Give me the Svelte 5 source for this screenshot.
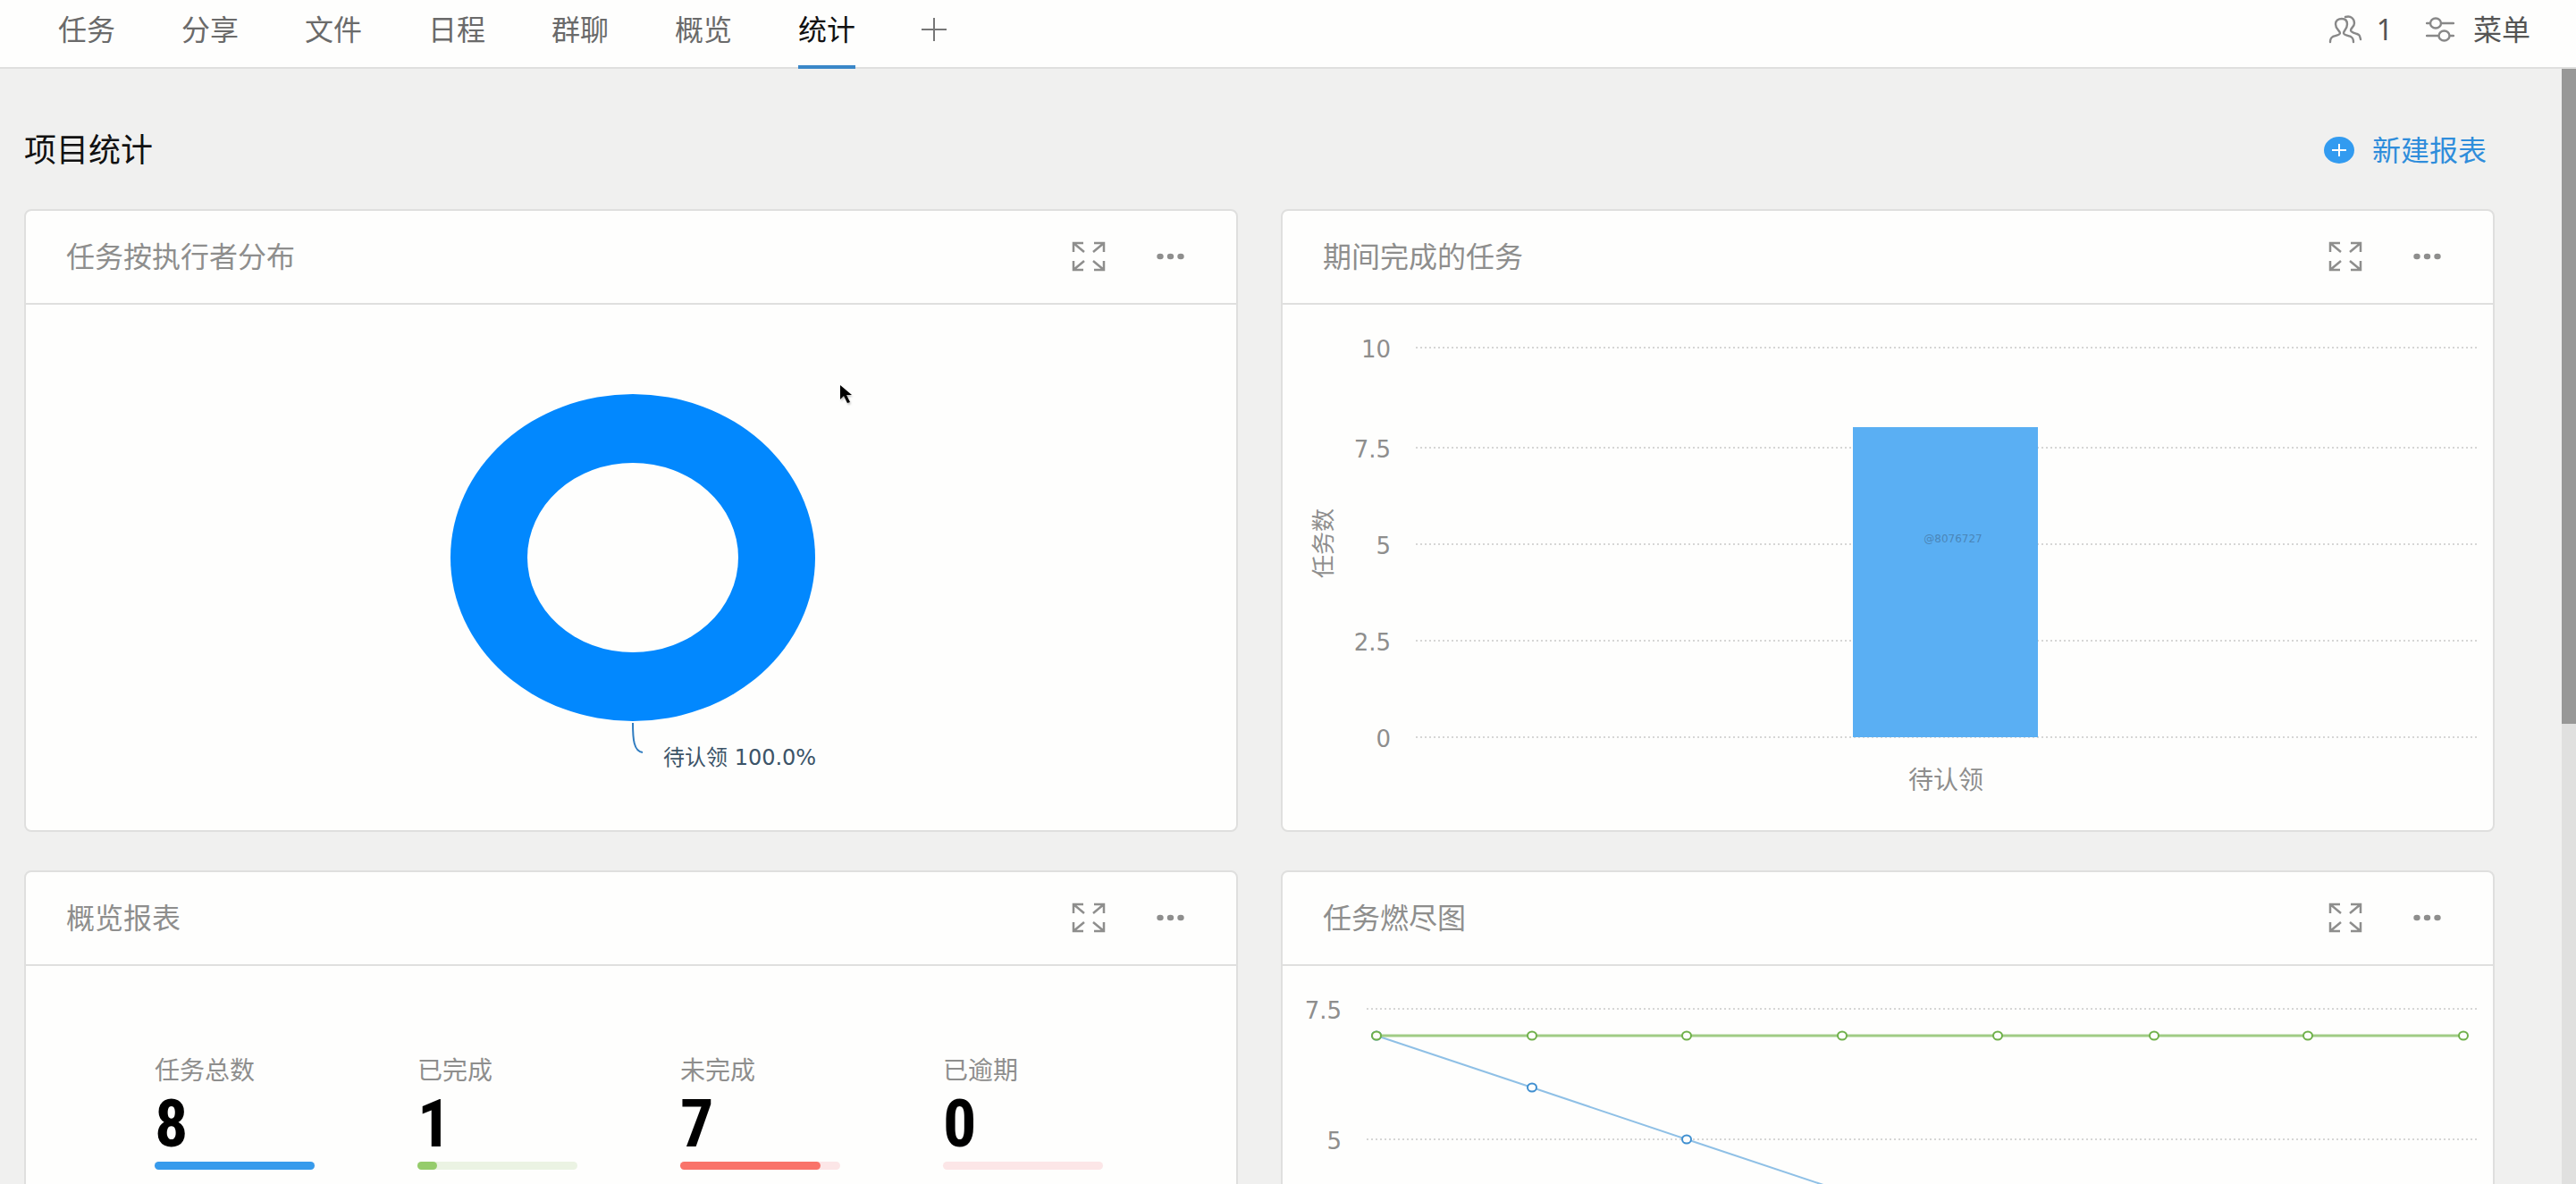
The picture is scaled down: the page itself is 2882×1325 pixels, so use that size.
<script>
  const tabs = ['任务', '分享', '文件', '日程', '群聊', '概览', '统计'];
  const active = '统计';

  const barTicks = [
    { label: '10', y: 48 },
    { label: '7.5', y: 160 },
    { label: '5', y: 268 },
    { label: '2.5', y: 376 },
    { label: '0', y: 484 }
  ];

  const stats = [
    { label: '任务总数', value: 8, share: 100, tone: 'blue' },
    { label: '已完成', value: 1, share: 12.5, tone: 'green' },
    { label: '未完成', value: 7, share: 87.5, tone: 'red' },
    { label: '已逾期', value: 0, share: 0, tone: 'red' }
  ];

  const burnTicks = [
    { label: '7.5', y: 48 },
    { label: '5', y: 194 }
  ];
  const days = [105, 279, 452, 626, 800, 975, 1147, 1321];
  const actual = days.map((x) => ({ x, y: 78 }));
  const ideal = days.map((x, i) => ({ x, y: 78 + 58 * i }));
  const toPoints = (list) => list.map((p) => `${p.x},${p.y}`).join(' ');
</script>

{#snippet cardHeader(title)}
  <header class="card-head">
    <h2>{title}</h2>
    <button class="icon-btn" aria-label="全屏">
      <svg class="expand" viewBox="0 0 38 34" aria-hidden="true">
        <path d="M13 2H2v10M2 2l12 10M25 2h11v10M36 2L24 12M13 32H2V22M2 32l12-10M25 32h11V22M36 32L24 22" />
      </svg>
    </button>
    <button class="icon-btn" aria-label="更多">
      <svg class="dots" viewBox="0 0 31 8" aria-hidden="true">
        <ellipse cx="4" cy="4" rx="3.7" ry="3.3" />
        <ellipse cx="15.5" cy="4" rx="3.7" ry="3.3" />
        <ellipse cx="27" cy="4" rx="3.7" ry="3.3" />
      </svg>
    </button>
  </header>
{/snippet}

<div class="app">
  <header class="topbar">
    <nav class="tabs">
      {#each tabs as tab}
        <a href="#{tab}" class:active={tab === active}>{tab}</a>
      {/each}
      <button class="icon-btn add" aria-label="添加">
        <svg class="plus" viewBox="0 0 28 28" aria-hidden="true"><path d="M14 1v26M0 14h28" /></svg>
      </button>
    </nav>
    <div class="tools">
      <button class="tool members">
        <svg class="people" viewBox="0 0 38 32" aria-hidden="true">
          <path d="M2 30C2 26 3 25 5 24C8 23 13 22 13 20C13 17 8 16 8 10C8 6 11 4 15 4C19 4 21 6 21 10C21 16 17 17 17 20C17 22 22 23 25 24C27 25 28 26 28 30" />
          <path d="M19 2C25 0 29 4 29 9C29 13 25 14 25 17C25 19 29 20 32 21C35 22 35 23 36 27" />
        </svg>
        <span>1</span>
      </button>
      <button class="tool menu">
        <svg class="sliders" viewBox="0 0 32 28" aria-hidden="true">
          <path d="M1 7h4M17 7h14M1 21h13M27 21h4" />
          <ellipse cx="11" cy="7" rx="6" ry="5.5" />
          <ellipse cx="20.5" cy="21" rx="6" ry="5.5" />
        </svg>
        <span>菜单</span>
      </button>
    </div>
  </header>

  <div class="viewport">
    <main>
      <div class="page-head">
        <h1>项目统计</h1>
        <button class="create">
          <svg class="create-icon" viewBox="0 0 34 32" aria-hidden="true">
            <ellipse cx="17" cy="16" rx="17" ry="15" />
            <path d="M17 9v14M9 16h16" />
          </svg>
          <span>新建报表</span>
        </button>
      </div>

      <div class="grid">
        <section class="card">
          {@render cardHeader('任务按执行者分布')}
          <svg class="chart" viewBox="0 0 1354 588" role="img" aria-label="待认领 100.0%">
            <ellipse class="ring" cx="679" cy="283" rx="204" ry="183" />
            <ellipse class="hole" cx="679" cy="283" rx="118" ry="106" />
            <path class="leader" d="M679 468C679 486 680 500 690 501" />
            <text class="pie-label" x="713" y="515">待认领 100.0%</text>
          </svg>
        </section>

        <section class="card">
          {@render cardHeader('期间完成的任务')}
          <svg class="chart" viewBox="0 0 1354 588" role="img" aria-label="任务数">
            {#each barTicks as tick}
              <line class="rule" x1="149" x2="1336" y1={tick.y} y2={tick.y} />
              <text class="tick" x="121" y={tick.y + 11}>{tick.label}</text>
            {/each}
            <rect class="bar" x="638" y="137" width="207" height="347" />
            <text class="bar-label" x="750" y="266">@8076727</text>
            <text class="axis" x="742" y="542">待认领</text>
            <text class="axis side" transform="translate(55 267) rotate(-90)">任务数</text>
          </svg>
        </section>

        <section class="card">
          {@render cardHeader('概览报表')}
          <dl class="stats">
            {#each stats as stat}
              <div class="stat {stat.tone}">
                <dt>{stat.label}</dt>
                <dd>{stat.value}</dd>
                <dd class="track"><div class="fill" style:width="{stat.share}%"></div></dd>
              </div>
            {/each}
          </dl>
        </section>

        <section class="card">
          {@render cardHeader('任务燃尽图')}
          <svg class="chart" viewBox="0 0 1354 588" role="img" aria-label="任务燃尽图">
            {#each burnTicks as tick}
              <line class="rule" x1="94" x2="1336" y1={tick.y} y2={tick.y} />
              <text class="tick" x="66" y={tick.y + 11}>{tick.label}</text>
            {/each}
            <g class="series ideal">
              <polyline points={toPoints(ideal)} />
              {#each ideal as p}<ellipse cx={p.x} cy={p.y} rx="5" ry="4.5" />{/each}
            </g>
            <g class="series actual">
              <polyline points={toPoints(actual)} />
              {#each actual as p}<ellipse cx={p.x} cy={p.y} rx="5" ry="4.5" />{/each}
            </g>
          </svg>
        </section>
      </div>
    </main>
    <div class="scrollbar" aria-hidden="true"><div class="thumb"></div><div class="rest"></div></div>
  </div>

  <svg class="pointer" viewBox="0 0 14 22" aria-hidden="true">
    <path d="M1 1v16l4-4 4 8 3-1-4-8h6z" />
  </svg>
</div>

<style>
  :global(body) {
    margin: 0;
    background: #f0f0ef;
  }

  .app {
    position: relative;
    display: flex;
    flex-direction: column;
    height: 100vh;
    overflow: hidden;
    color: #666;
    font-family: 'Noto Sans', 'Noto Sans CJK SC', sans-serif;
    font-size: 32px;
    line-height: 40px;
  }

  button {
    padding: 0;
    border: 0;
    background: none;
    color: inherit;
    font: inherit;
    cursor: pointer;
  }

  svg {
    display: block;
    flex: none;
  }

  h1,
  h2,
  dl,
  dd {
    margin: 0;
    font-weight: 400;
  }

  .topbar {
    display: flex;
    justify-content: space-between;
    flex: none;
    height: 75px;
    padding: 0 51px 0 65px;
    border-bottom: 2px solid #dfdfde;
    background: #fefefd;
  }

  .tabs {
    display: flex;
    gap: 74px;
  }

  .tabs a {
    box-sizing: border-box;
    height: 77px;
    padding-top: 13px;
    color: #6a6a6a;
    text-decoration: none;
  }

  .tabs a.active {
    border-bottom: 4px solid #3a87c8;
    color: #111;
  }

  .add {
    height: 66px;
  }

  .plus {
    width: 28px;
    height: 28px;
    fill: none;
    stroke: #777;
    stroke-width: 2;
  }

  .tools,
  .tool {
    display: flex;
    align-items: center;
  }

  .tools {
    gap: 37px;
    height: 66px;
  }

  .tool {
    color: #555;
  }

  .members {
    gap: 16px;
  }

  .menu {
    gap: 21px;
  }

  .people,
  .sliders {
    fill: none;
    stroke: #888;
    stroke-width: 2.4;
    stroke-linecap: round;
    stroke-linejoin: round;
  }

  .people {
    width: 38px;
    height: 32px;
  }

  .sliders {
    width: 32px;
    height: 28px;
  }

  .viewport {
    display: flex;
    flex: 1;
    min-height: 0;
  }

  main {
    flex: 1;
    min-width: 0;
    padding: 0 75px 0 27px;
    overflow: hidden;
  }

  .page-head {
    display: flex;
    align-items: center;
    justify-content: space-between;
    height: 82px;
    padding: 50px 9px 25px 0;
  }

  h1 {
    color: #111;
    font-size: 36px;
  }

  .create {
    display: flex;
    align-items: center;
    gap: 20px;
    color: #2f8ddb;
  }

  .create-icon {
    width: 34px;
    height: 32px;
    fill: #329bf0;
    stroke: #fff;
    stroke-width: 2;
  }

  .create-icon ellipse {
    stroke: none;
  }

  .grid {
    display: grid;
    grid-template-columns: 1fr 1fr;
    gap: 43px 48px;
  }

  .card {
    border: 2px solid #dfdfde;
    border-radius: 8px;
    background: #fefefd;
  }

  .card-head {
    display: flex;
    box-sizing: border-box;
    align-items: center;
    height: 105px;
    padding: 0 58px 2px 45px;
    border-bottom: 2px solid #dfdfde;
    color: #8e8e8d;
  }

  h2 {
    flex: 1;
    font-size: 32px;
  }

  .icon-btn {
    display: flex;
    align-items: center;
  }

  .card-head .icon-btn + .icon-btn {
    margin-left: 57px;
  }

  .expand {
    width: 38px;
    height: 34px;
    fill: none;
    stroke: #8e8e8d;
    stroke-width: 2.5;
  }

  .dots {
    width: 31px;
    height: 8px;
    fill: #8e8e8d;
  }

  .chart {
    width: 100%;
    height: auto;
    font-family: 'DejaVu Sans', 'Noto Sans CJK SC', sans-serif;
  }

  .ring {
    fill: #0288fe;
  }

  .hole {
    fill: #fefefd;
  }

  .leader {
    fill: none;
    stroke: #2f7cc0;
    stroke-width: 2;
  }

  .pie-label {
    fill: #3c5468;
    font-size: 24px;
  }

  .rule {
    stroke: #d6d6d5;
    stroke-width: 2;
    stroke-dasharray: 2 3;
  }

  .tick {
    fill: #8e8e8d;
    font-size: 26px;
    text-anchor: end;
  }

  .axis {
    fill: #8e8e8d;
    font-size: 28px;
    text-anchor: middle;
  }

  .side {
    font-size: 26px;
  }

  .bar {
    fill: #5aaff3;
  }

  .bar-label {
    fill: #4a86b8;
    font-size: 12px;
    text-anchor: middle;
  }

  .stats {
    display: grid;
    grid-template-columns: repeat(4, 1fr);
    gap: 115px;
    padding: 97px 149px 0 144px;
  }

  .stat {
    color: #000;
    font-family: 'Roboto Condensed', 'Open Sans Condensed', Roboto, sans-serif;
    font-size: 74px;
    line-height: 68px;
  }

  .stat dt {
    color: #8e8e8d;
    font-family: 'Noto Sans CJK SC', sans-serif;
    font-size: 28px;
    line-height: 36px;
  }

  .stat dd {
    margin-top: 10px;
    font-weight: 700;
  }

  .stat .track {
    height: 9px;
    margin-top: 8px;
    border-radius: 5px;
    background: #fce6e7;
  }

  .fill {
    height: 9px;
    border-radius: 5px;
    background: #f9736a;
  }

  .green .track {
    background: #ebf3e3;
  }

  .green .fill {
    background: #95cc6b;
  }

  .blue .fill {
    background: #379bec;
  }

  .series {
    stroke-width: 2;
  }

  .series polyline {
    fill: none;
  }

  .series ellipse {
    fill: #fefefd;
  }

  .ideal polyline {
    stroke: #8fc0e6;
  }

  .ideal ellipse {
    stroke: #3f8fd0;
  }

  .actual polyline {
    stroke: #a0cc85;
    stroke-width: 3;
  }

  .actual ellipse {
    stroke: #6fb04a;
  }

  .scrollbar {
    display: flex;
    flex: none;
    flex-direction: column;
    width: 16px;
    background: #e0e0df;
  }

  .thumb {
    flex: 733;
    background: #989897;
  }

  .rest {
    flex: 515;
  }

  .pointer {
    position: absolute;
    top: 430px;
    left: 939px;
    width: 14px;
    height: 22px;
    fill: #000;
    filter: drop-shadow(1px 2px 1px #bbb);
  }
</style>
